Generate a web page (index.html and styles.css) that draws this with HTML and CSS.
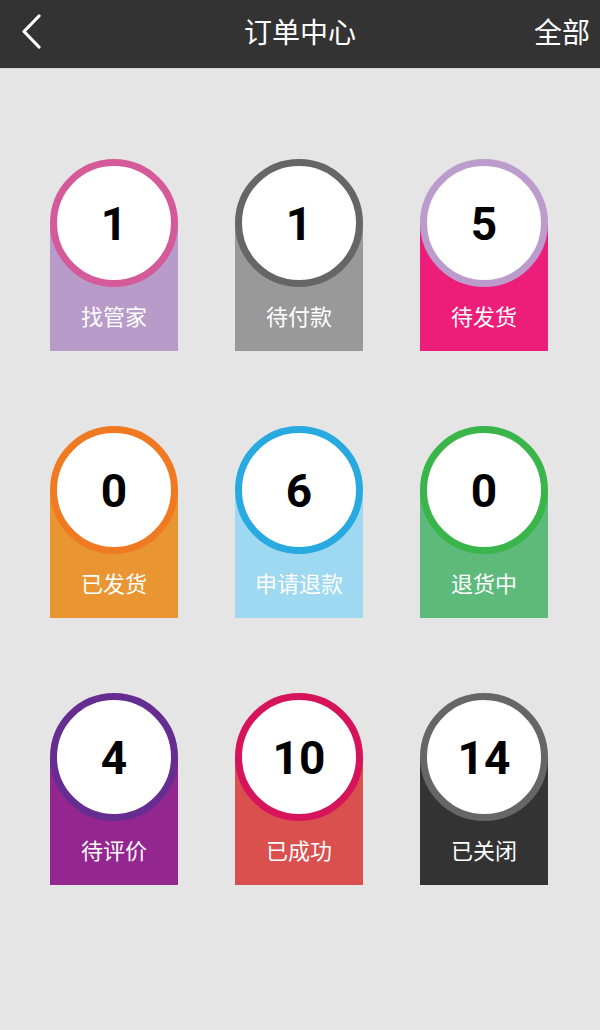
FILE: index.html
```html
<!DOCTYPE html>
<html lang="zh">
<head>
<meta charset="utf-8">
<title>订单中心</title>
<link rel="stylesheet" href="styles.css">
</head>
<body>
<header class="topbar">
  <div class="topbar-left">
    <svg class="back" width="20" height="36" viewBox="0 0 20 36"><polyline points="17,2 2,17.5 17,33" fill="none" stroke="#fff" stroke-width="3.2" stroke-linecap="round" stroke-linejoin="round"/></svg>
  </div>
  <h1 class="title">订单中心</h1>
  <div class="topbar-right">全部</div>
</header>
<main class="grid">
  <div class="card c1"><div class="circle">1</div><div class="base">找管家</div></div>
  <div class="card c2"><div class="circle">1</div><div class="base">待付款</div></div>
  <div class="card c3"><div class="circle">5</div><div class="base">待发货</div></div>
  <div class="card c4"><div class="circle">0</div><div class="base">已发货</div></div>
  <div class="card c5"><div class="circle">6</div><div class="base">申请退款</div></div>
  <div class="card c6"><div class="circle">0</div><div class="base">退货中</div></div>
  <div class="card c7"><div class="circle">4</div><div class="base">待评价</div></div>
  <div class="card c8"><div class="circle">10</div><div class="base">已成功</div></div>
  <div class="card c9"><div class="circle">14</div><div class="base">已关闭</div></div>
</main>
</body>
</html>
```
FILE: styles.css
```css
* { box-sizing: border-box; }
html, body { margin: 0; padding: 0; }
body {
  width: 600px;
  height: 1030px;
  background: #e5e5e5;
  font-family: "Noto Sans CJK SC", "Noto Sans", sans-serif;
  overflow: hidden;
}
.topbar {
  height: 69px;
  background: #333333;
  display: grid;
  grid-template-columns: 1fr auto 1fr;
  align-items: center;
  border-bottom: 1px solid #d6d6d6;
}
.topbar-left { padding-left: 22px; display: flex; align-items: center; }
.back { display: block; margin-top: -4px; }
.title {
  margin: 0;
  color: #fff;
  font-weight: normal;
  font-size: 28px;
  line-height: 36px;
  margin-top: -6px;
}
.topbar-right {
  justify-self: end;
  padding-right: 10px;
  color: #fff;
  font-size: 28px;
  line-height: 36px;
  margin-top: -6px;
}
.grid {
  display: grid;
  grid-template-columns: repeat(3, 128px);
  column-gap: 57px;
  row-gap: 75px;
  padding: 90px 0 0 50px;
}
.card {
  width: 128px;
  height: 192px;
}
.circle {
  position: relative;
  z-index: 1;
  width: 128px;
  height: 128px;
  margin-bottom: -64px;
  border-radius: 50%;
  border: 7px solid #999;
  background: #fff;
  display: flex;
  align-items: center;
  justify-content: center;
  font-family: Roboto, "Liberation Sans", sans-serif;
  font-weight: bold;
  font-size: 46px;
  line-height: 1;
  color: #000;
  padding-top: 2px;
}
.base {
  height: 128px;
  padding-top: 77px;
  text-align: center;
  color: #fff;
  font-size: 22px;
  line-height: 30px;
}
.c1 .circle { border-color: #d45a99; } .c1 .base { background: #b99bc9; }
.c2 .circle { border-color: #666666; } .c2 .base { background: #999999; }
.c3 .circle { border-color: #bb9ccc; } .c3 .base { background: #ed1e79; }
.c4 .circle { border-color: #f07a22; } .c4 .base { background: #e99632; }
.c5 .circle { border-color: #28aae1; } .c5 .base { background: #9ed8f1; }
.c6 .circle { border-color: #3ab54a; } .c6 .base { background: #5dba7a; }
.c7 .circle { border-color: #662d91; } .c7 .base { background: #93278f; }
.c8 .circle { border-color: #d6145b; } .c8 .base { background: #d9504e; }
.c9 .circle { border-color: #666666; } .c9 .base { background: #333333; }
```
